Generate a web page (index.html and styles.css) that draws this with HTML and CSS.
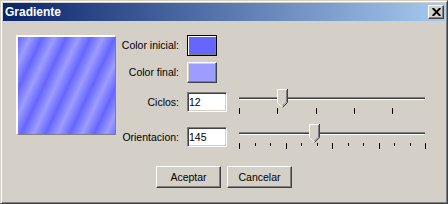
FILE: index.html
```html
<!DOCTYPE html>
<html lang="es">
<head>
    <meta charset="UTF-8">
    <title>Gradiente</title>
    <link rel="stylesheet" href="styles.css">
</head>
<body>
    <div class="window">
        <div class="titlebar">
            <span class="title">Gradiente</span>
            <button class="close">
                <svg width="9" height="8" viewBox="0 0 9 8">
                    <path d="M0.7 0 L8.3 8 M8.3 0 L0.7 8" stroke="#000" stroke-width="1.9" fill="none"/>
                </svg>
            </button>
        </div>

        <div class="form">
            <div class="preview"></div>

            <label class="lbl row1">Color inicial:</label>
            <button class="swatch swatch-default row1" style="background-color:#6666ff"></button>

            <label class="lbl row2">Color final:</label>
            <button class="swatch row2" style="background-color:#9d9dff"></button>

            <label class="lbl row3" for="ciclos">Ciclos:</label>
            <input class="num row3" type="text" id="ciclos" value="12">
            <div class="slider row3">
                <div class="track"></div>
                <div class="ticks ticks-wide">
                    <span class="tick"></span><span class="tick"></span><span class="tick"></span><span class="tick"></span><span class="tick"></span>
                </div>
                <svg class="thumb" style="left:44px" width="11" height="19" viewBox="0 0 11 19">
                    <polygon points="0,0 11,0 11,13.5 5.5,19 0,13.5" fill="#d4d0c8"/>
                    <polyline points="0.5,13.5 0.5,0.5 10,0.5" stroke="#fff" fill="none"/>
                    <polyline points="0.5,13.5 5.5,18.5" stroke="#fff" fill="none"/>
                    <polyline points="10.5,0 10.5,13.5 5.5,18.5" stroke="#404040" fill="none"/>
                    <polyline points="9.5,1 9.5,13 5.5,17" stroke="#808080" fill="none"/>
                </svg>
            </div>

            <label class="lbl row4" for="orient">Orientacion:</label>
            <input class="num row4" type="text" id="orient" value="145">
            <div class="slider row4">
                <div class="track"></div>
                <div class="ticks ticks-full">
                    <span class="tick"></span><span class="tick short"></span><span class="tick short"></span>
                    <span class="tick"></span><span class="tick short"></span><span class="tick short"></span>
                    <span class="tick"></span><span class="tick short"></span><span class="tick short"></span>
                    <span class="tick"></span><span class="tick short"></span><span class="tick short"></span>
                    <span class="tick"></span>
                </div>
                <svg class="thumb" style="left:76px" width="11" height="19" viewBox="0 0 11 19">
                    <polygon points="0,0 11,0 11,13.5 5.5,19 0,13.5" fill="#d4d0c8"/>
                    <polyline points="0.5,13.5 0.5,0.5 10,0.5" stroke="#fff" fill="none"/>
                    <polyline points="0.5,13.5 5.5,18.5" stroke="#fff" fill="none"/>
                    <polyline points="10.5,0 10.5,13.5 5.5,18.5" stroke="#404040" fill="none"/>
                    <polyline points="9.5,1 9.5,13 5.5,17" stroke="#808080" fill="none"/>
                </svg>
            </div>
        </div>

        <div class="actions">
            <button class="btn">Aceptar</button>
            <button class="btn">Cancelar</button>
        </div>
    </div>
</body>
</html>
```

FILE: styles.css
```css
body {
    margin: 0;
    background: #d4d0c8;
    font-family: "Liberation Sans", Arial, sans-serif;
    font-size: 10.5px;
}

.window {
    width: 448px;
    height: 204px;
    box-sizing: border-box;
    background: #d4d0c8;
    border: 1px solid;
    border-color: #d4d0c8 #404040 #404040 #d4d0c8;
    box-shadow: inset 1px 1px #fff, inset -1px -1px #808080;
    padding: 2px;
}

.titlebar {
    height: 18px;
    display: flex;
    align-items: center;
    justify-content: space-between;
    padding: 0 1px 0 2px;
    background: linear-gradient(to right, #0a246a, #a6caf0);
}

.title {
    color: #fff;
    font-weight: bold;
    font-size: 12px;
}

.close {
    width: 16px;
    height: 14px;
    padding: 0;
    display: flex;
    align-items: center;
    justify-content: center;
    background: #d4d0c8;
    border: 1px solid;
    border-color: #fff #404040 #404040 #fff;
    box-shadow: inset -1px -1px #808080;
}

.form {
    display: grid;
    grid-template-columns: 100px 71px 40px 204px;
    grid-template-rows: 27px 30px 35px 20px;
    margin: 14px 0 0 13px;
}

.preview {
    grid-column: 1;
    grid-row: 1 / 5;
    width: 100px;
    height: 100px;
    box-sizing: border-box;
    border-style: solid;
    border-width: 2px 1px 1px 2px;
    border-color: #fff #808080 #808080 #fff;
    background: repeating-linear-gradient(115deg, #6666ff 0, #9d9dff 11px, #6666ff 22px);
}

.row1 { grid-row: 1; }
.row2 { grid-row: 2; }
.row3 { grid-row: 3; }
.row4 { grid-row: 4; }

.lbl {
    grid-column: 2;
    text-align: right;
    padding-right: 8px;
    line-height: 21px;
    color: #000;
}

.swatch {
    grid-column: 3;
    width: 30px;
    height: 21px;
    padding: 0;
    border: 1px solid;
    border-color: #fff #404040 #404040 #fff;
    box-shadow: inset -1px -1px #808080, inset 1px 1px #d4d0c8;
}

.swatch-default {
    border-color: #000;
    box-shadow: inset 1px 1px #fff, inset -1px -1px #808080;
}

.num {
    grid-column: 3;
    width: 40px;
    height: 20px;
    box-sizing: border-box;
    margin: 0;
    padding: 0 1px;
    border: 1px solid;
    border-color: #808080 #fff #fff #808080;
    box-shadow: inset 1px 1px #404040, inset -1px -1px #d4d0c8;
    background: #fff;
    font-family: "Liberation Sans", Arial, sans-serif;
    font-size: 10.5px;
    outline: none;
}

.slider {
    grid-column: 4;
    position: relative;
    width: 198px;
    height: 26px;
    margin: -3px 0 0 6px;
}

.track {
    position: absolute;
    left: 6px;
    right: 6px;
    top: 8px;
    height: 1px;
    background: #404040;
    border-top: 1px solid #808080;
    border-bottom: 1px solid #fff;
}

.thumb {
    position: absolute;
    top: 0;
}

.ticks {
    position: absolute;
    left: 6px;
    top: 19px;
    display: flex;
    justify-content: space-between;
    align-items: flex-start;
}

.ticks-wide { width: 154px; }
.ticks-full { width: 187px; }

.tick {
    width: 1px;
    height: 6px;
    background: #000;
}

.tick.short {
    height: 3px;
}

.actions {
    display: flex;
    justify-content: center;
    gap: 6px;
    margin-top: 19px;
}

.btn {
    width: 65px;
    height: 22px;
    padding: 0;
    background: #d4d0c8;
    border: 1px solid;
    border-color: #fff #404040 #404040 #fff;
    box-shadow: inset -1px -1px #808080;
    font-family: "Liberation Sans", Arial, sans-serif;
    font-size: 10.5px;
    color: #000;
}
```
